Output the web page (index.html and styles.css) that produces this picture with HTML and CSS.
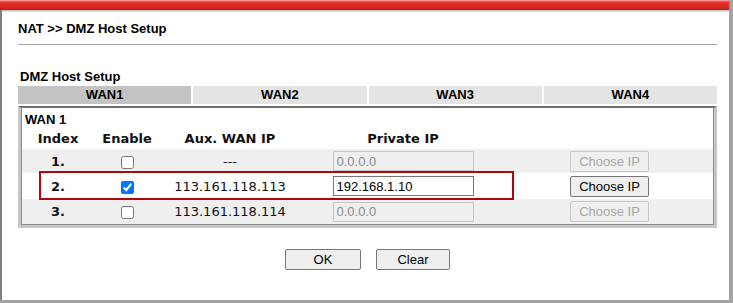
FILE: index.html
```html
<!DOCTYPE html>
<html lang="en">
<head>
    <meta charset="UTF-8">
    <title>NAT >> DMZ Host Setup</title>
    <link rel="stylesheet" href="styles.css">
</head>
<body>
    <div class="window">
        <div class="topbar"></div>
        <div class="page">
            <h1 class="page-title">NAT &gt;&gt; DMZ Host Setup</h1>
            <div class="rule"></div>

            <div class="section-title">DMZ Host Setup</div>
            <div class="tabs">
                <div class="tab active">WAN1</div>
                <div class="tab">WAN2</div>
                <div class="tab">WAN3</div>
                <div class="tab">WAN4</div>
            </div>

            <div class="panel">
                <div class="panel-inner">
                    <div class="wan-label">WAN 1</div>
                    <table class="hosts">
                        <colgroup>
                            <col style="width:72px">
                            <col style="width:66px">
                            <col style="width:140px">
                            <col style="width:206px">
                            <col>
                        </colgroup>
                        <tr class="head">
                            <th>Index</th>
                            <th>Enable</th>
                            <th>Aux. WAN IP</th>
                            <th>Private IP</th>
                            <th></th>
                        </tr>
                        <tr class="row stripe first">
                            <td class="num">1.</td>
                            <td><input type="checkbox" class="check"></td>
                            <td>---</td>
                            <td><input type="text" class="ip" value="0.0.0.0" disabled></td>
                            <td><button class="btn choose" disabled>Choose IP</button></td>
                        </tr>
                        <tr class="row">
                            <td class="num">2.</td>
                            <td><input type="checkbox" class="check" checked></td>
                            <td>113.161.118.113</td>
                            <td><input type="text" class="ip" value="192.168.1.10"></td>
                            <td><button class="btn choose">Choose IP</button></td>
                        </tr>
                        <tr class="row stripe last">
                            <td class="num">3.</td>
                            <td><input type="checkbox" class="check"></td>
                            <td>113.161.118.114</td>
                            <td><input type="text" class="ip" value="0.0.0.0" disabled></td>
                            <td><button class="btn choose" disabled>Choose IP</button></td>
                        </tr>
                    </table>
                </div>
                <div class="highlight"></div>
            </div>

            <div class="actions">
                <button class="btn ok">OK</button>
                <button class="btn clear">Clear</button>
            </div>
        </div>
    </div>
</body>
</html>
```

FILE: styles.css
```css
body {
    margin: 0;
    background: #fff;
    color: #000;
    font-family: "Liberation Sans", Arial, sans-serif;
    font-size: 13px;
}

.window {
    width: 733px;
    height: 303px;
    box-sizing: border-box;
    display: flex;
    flex-direction: column;
    border-right: 4px solid #a3a3a3;
    border-bottom: 3px solid #a3a3a3;
}

.topbar {
    flex: none;
    height: 10px;
    background: linear-gradient(#f4928d 0, #f4928d 1px, #e0322b 2px, #d6251f 8px, #b51c17 10px);
    box-shadow: 0 1px 2px rgba(0, 0, 0, 0.35);
}

.page {
    flex: 1;
    border-left: 2px solid #7f7f7f;
    padding: 11px 0 0 16px;
}

.page-title {
    margin: 0;
    font-size: 13px;
    font-weight: bold;
    line-height: 16px;
}

.rule {
    width: 699px;
    height: 1px;
    margin-top: 7px;
    background: #a5a5a5;
}

.section-title {
    margin: 24px 0 0 2px;
    font-weight: bold;
    line-height: 16px;
}

.tabs {
    display: grid;
    grid-template-columns: repeat(4, 1fr);
    gap: 2px;
    width: 699px;
    margin-top: 1px;
}

.tab {
    height: 18px;
    line-height: 18px;
    text-align: center;
    font-weight: bold;
    background: #e4e4e4;
}

.tab.active {
    background: #c3c3c3;
}

.panel {
    position: relative;
    width: 699px;
    box-sizing: border-box;
    margin-top: 2px;
    border: 3px solid #c6c6c6;
    border-top: 2px solid #6f6f6f;
}

.panel-inner {
    border: 1px solid #8a8a8a;
    border-top: 0;
}

.wan-label {
    height: 20px;
    box-sizing: border-box;
    padding: 4px 0 0 3px;
    font-weight: bold;
    line-height: 16px;
}

.hosts {
    width: 100%;
    border-collapse: collapse;
    table-layout: fixed;
    font-family: "DejaVu Sans", Verdana, sans-serif;
    font-size: 13px;
    color: #111;
}

.hosts th,
.hosts td {
    padding: 0;
    text-align: center;
    vertical-align: middle;
}

.hosts .head {
    height: 21px;
}

.hosts .row {
    height: 26px;
}

.hosts .row.first {
    height: 24px;
}

.hosts .row.last {
    height: 25px;
}

.hosts .stripe td {
    background: #efefef;
}

.num {
    font-weight: bold;
}

.check {
    margin: 0;
    vertical-align: middle;
}

.ip {
    display: block;
    width: 141px;
    height: 20px;
    box-sizing: border-box;
    margin: 0 auto;
    padding: 0 3px;
    border: 1px solid #767676;
    border-radius: 0;
    background: #fff;
    color: #000;
    font: 13px "Liberation Sans", Arial, sans-serif;
}

.ip:disabled {
    background: #efefef;
    border-color: #c6c6c6;
    color: #8a8a8a;
}

.btn {
    height: 21px;
    padding: 0;
    border: 1px solid #767676;
    border-radius: 2px;
    background: #efefef;
    color: #000;
    font: 13px "Liberation Sans", Arial, sans-serif;
}

.choose {
    width: 79px;
    vertical-align: middle;
}

.choose:disabled {
    border-color: #c8c8c8;
    color: #a8a8a8;
}

.highlight {
    position: absolute;
    left: 18px;
    top: 63px;
    width: 475px;
    height: 29px;
    box-sizing: border-box;
    border: 2px solid #b0060c;
}

.actions {
    display: flex;
    justify-content: center;
    gap: 15px;
    width: 699px;
    margin-top: 21px;
}

.ok {
    width: 76px;
}

.clear {
    width: 74px;
}
```
